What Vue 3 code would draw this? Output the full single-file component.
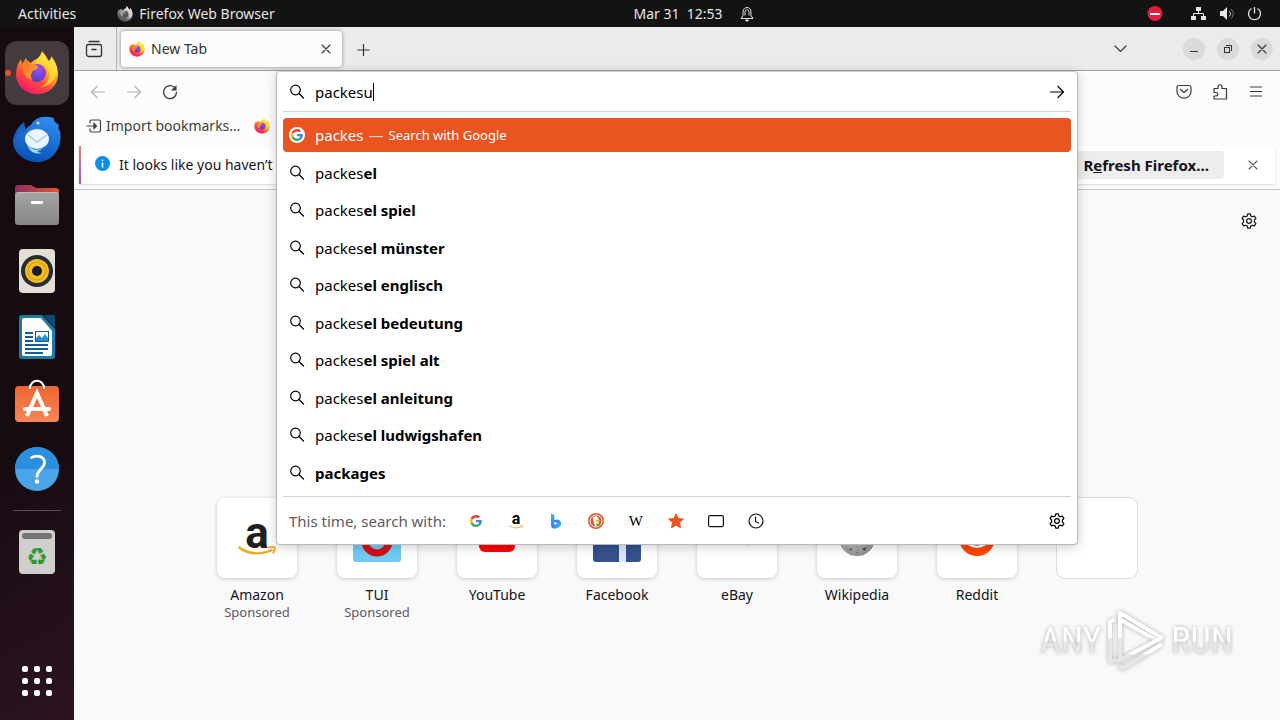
<script setup>
import { ref } from 'vue'

const query = ref('packesu')

const suggestions = [
  { typed: 'packes', rest: 'el' },
  { typed: 'packes', rest: 'el spiel' },
  { typed: 'packes', rest: 'el münster' },
  { typed: 'packes', rest: 'el englisch' },
  { typed: 'packes', rest: 'el bedeutung' },
  { typed: 'packes', rest: 'el spiel alt' },
  { typed: 'packes', rest: 'el anleitung' },
  { typed: 'packes', rest: 'el ludwigshafen' },
  { typed: '', rest: 'packages' }
]

const dockApps = [
  { id: 'firefox', name: 'Firefox', size: 44, active: true },
  { id: 'thunderbird', name: 'Thunderbird', size: 48 },
  { id: 'files', name: 'Files', size: 48 },
  { id: 'rhythmbox', name: 'Rhythmbox', size: 48 },
  { id: 'writer', name: 'LibreOffice Writer', size: 48 },
  { id: 'software', name: 'Ubuntu Software', size: 48 },
  { id: 'help', name: 'Help', size: 48 }
]

const engines = [
  { id: 'google', name: 'Google' },
  { id: 'amazon', name: 'Amazon' },
  { id: 'bing', name: 'Bing' },
  { id: 'duck', name: 'DuckDuckGo' },
  { id: 'wikipedia', name: 'Wikipedia' },
  { id: 'star', name: 'Bookmarks' },
  { id: 'tabs', name: 'Tabs' },
  { id: 'history', name: 'History' }
]

const sites = [
  { id: 'amazon', name: 'Amazon', sponsored: true },
  { id: 'tui', name: 'TUI', sponsored: true },
  { id: 'youtube', name: 'YouTube' },
  { id: 'facebook', name: 'Facebook' },
  { id: 'ebay', name: 'eBay' },
  { id: 'globe', name: 'Wikipedia' },
  { id: 'reddit', name: 'Reddit' }
]
</script>

<template>
  <div class="desktop">
    <svg class="sprite" aria-hidden="true">
      <defs>
        <linearGradient id="fx-body" x1="0.85" y1="0.1" x2="0.3" y2="1">
          <stop offset="0" stop-color="#fff14a" />
          <stop offset="0.35" stop-color="#ffad1f" />
          <stop offset="0.65" stop-color="#ff4d3a" />
          <stop offset="1" stop-color="#f5156c" />
        </linearGradient>
        <linearGradient id="fx-ear" x1="0" y1="0" x2="1" y2="1">
          <stop offset="0" stop-color="#ff6a2c" />
          <stop offset="1" stop-color="#ffb02a" />
        </linearGradient>
        <radialGradient id="fx-globe" cx="0.6" cy="0.3" r="0.7">
          <stop offset="0" stop-color="#9a4df0" />
          <stop offset="1" stop-color="#5b3bc4" />
        </radialGradient>
        <linearGradient id="tb-body" x1="0.7" y1="0" x2="0.4" y2="1">
          <stop offset="0" stop-color="#2f8ff0" />
          <stop offset="1" stop-color="#0b51b5" />
        </linearGradient>
        <linearGradient id="folder-back" x1="0" x2="1">
          <stop offset="0" stop-color="#8a2f62" />
          <stop offset="1" stop-color="#e9542a" />
        </linearGradient>
        <linearGradient id="folder-front" x1="0" y1="0" x2="0" y2="1">
          <stop offset="0" stop-color="#a5a5a5" />
          <stop offset="1" stop-color="#868686" />
        </linearGradient>
        <linearGradient id="bag" x1="0" y1="0" x2="0" y2="1">
          <stop offset="0" stop-color="#f0652f" />
          <stop offset="1" stop-color="#f4865a" />
        </linearGradient>
        <linearGradient id="bing-fill" x1="0" y1="0" x2="1" y2="1">
          <stop offset="0" stop-color="#5aa8f8" />
          <stop offset="0.5" stop-color="#2f86f2" />
          <stop offset="1" stop-color="#45c4f4" />
        </linearGradient>
        <linearGradient id="mark" x1="0" y1="0" x2="0" y2="1">
          <stop offset="0.5" stop-color="#ffffff" />
          <stop offset="0.52" stop-color="#e6e6e8" />
        </linearGradient>
        <radialGradient id="globe-fill" cx="0.4" cy="0.3" r="0.7">
          <stop offset="0" stop-color="#f4f4f4" />
          <stop offset="1" stop-color="#8f8f8f" />
        </radialGradient>
      </defs>

      <symbol id="firefox" viewBox="0 0 44 44">
        <path fill="url(#fx-body)" d="M27 1c3 3 5 6 6 9 3-1 3-3 3-4 4 4 7 10 7 17 0 12-9 20-21 20S1 34 1 23c0-6 2-11 5-15l1 5 4-6c1 3 3 4 5 5 3-4 8-3 11-11z" />
        <path fill="#ffe13b" d="M27 0c-1 5-5 8-6 13 4-2 12 0 13 9 1 7-3 12-8 14 8-1 15-7 16-14 1-7-3-14-6-17 0 2 0 4-2 6-1-4-4-7-7-11z" opacity=".75" />
        <circle cx="22" cy="22" r="9" fill="url(#fx-globe)" />
        <path fill="url(#fx-ear)" d="M11 8c1 3 3 5 6 5 2 0 6 1 6 3 0 3-5 3-6 5-1 3-2 5 1 8-8-1-11-9-10-13 0-3 1-6 3-8z" />
      </symbol>

      <symbol id="thunderbird" viewBox="0 0 48 48">
        <path fill="#1560c0" d="M11 7c-6 5-11 12-11 20 1 10 9 18 20 19L14 20z" />
        <path fill="url(#tb-body)" d="M18 10c4-8 13-10 23-7-1 2 0 4 5 7-1 2-1 4 1 6 3 16-7 31-23 31C11 47 3 39 3 29c0-7 3-11 7-14-1 3 0 5 1 6 0-5 3-9 7-11z" />
        <ellipse cx="24" cy="24" rx="12" ry="10" fill="#eaf6fd" />
        <path fill="none" stroke="#9fcde8" stroke-width="1.5" d="M15 20l9 7 10-7" />
        <path fill="#9bd9f7" d="M14 29c4 6 10 7 16 4-2 2-4 3-6 3 1 1 3 2 5 2-8 2-13-2-15-9z" />
        <circle cx="25" cy="8" r="1.5" fill="#bfe3ff" />
      </symbol>

      <symbol id="files" viewBox="0 0 48 48">
        <path fill="url(#folder-back)" d="M2 12V7q0-3 3-3h13l5 3h20q3 0 3 3v6H2z" />
        <rect x="2" y="11" width="44" height="33" rx="3" fill="url(#folder-front)" />
        <path stroke="#b9b9b9" d="M4 11.500h40" />
        <rect x="18" y="20" width="12" height="3" rx="1" fill="#fff" />
      </symbol>

      <symbol id="rhythmbox" viewBox="0 0 48 48">
        <rect x="6" y="2" width="36" height="44" rx="4" fill="#e4dfd6" />
        <circle cx="24" cy="24" r="16" fill="#272b33" />
        <circle cx="24" cy="24" r="12" fill="#f2bb25" />
        <circle cx="24" cy="24" r="9" fill="none" stroke="#d39a12" />
        <circle cx="24" cy="24" r="5" fill="#171a21" />
      </symbol>

      <symbol id="writer" viewBox="0 0 48 48">
        <path fill="#1c7aa6" d="M6 5q0-3 3-3h20l13 14v27q0 3-3 3H9q-3 0-3-3z" />
        <path fill="#0e4a6c" d="M30 2h12v13z" />
        <path fill="#fff" d="M9 7q0-2 2-2h17l11 13v23q0 2-2 2H11q-2 0-2-2z" />
        <path stroke="#135c96" stroke-width="2" d="M12 20h8M12 24h8M12 28h8M12 32h23M12 36h23M12 40h18" />
        <rect x="22.500" y="18.500" width="13" height="10" fill="#fff" stroke="#135c96" />
        <path fill="#2a8fd0" d="M23 28v-3l3-3 3 3 3-4 3 4v3z" />
      </symbol>

      <symbol id="software" viewBox="0 0 48 48">
        <path fill="none" stroke="#fff" stroke-width="2" d="M17 10c0-11 14-11 14 0" />
        <rect x="2" y="7" width="44" height="36" rx="4" fill="url(#bag)" />
        <path fill="none" stroke="#fff" stroke-width="2" d="M17 10V6m14 4V6" />
        <path fill="none" stroke="#fff" stroke-width="4" d="M14 37l10-23 10 23" />
        <path stroke="#fff" stroke-width="4" stroke-linecap="round" d="M12 30h24" />
      </symbol>

      <symbol id="help" viewBox="0 0 48 48">
        <circle cx="24" cy="24" r="22" fill="#4aa5e8" />
        <path fill="#2b8fdf" d="M2 24a22 22 0 0 1 44 0z" />
        <path fill="none" stroke="#fff" stroke-width="2.800" stroke-linecap="round" d="M18.500 12.500c6-3 13-1 13 5 0 6.500-7.500 6.500-7.500 14" />
        <circle cx="24" cy="36.500" r="2.300" fill="#fff" />
      </symbol>

      <symbol id="google" viewBox="0 0 48 48">
        <path fill="#EA4335" d="M24 9.500c3.540 0 6.710 1.220 9.210 3.600l6.850-6.850C35.900 2.380 30.470 0 24 0 14.620 0 6.510 5.380 2.560 13.220l7.980 6.190C12.430 13.720 17.740 9.500 24 9.500z" />
        <path fill="#4285F4" d="M46.980 24.550c0-1.570-.15-3.090-.38-4.550H24v9.020h12.940c-.58 2.960-2.260 5.480-4.780 7.180l7.730 6c4.510-4.180 7.090-10.360 7.090-17.650z" />
        <path fill="#FBBC05" d="M10.530 28.590c-.48-1.450-.76-2.990-.76-4.590s.27-3.140.76-4.590l-7.980-6.190C.92 16.460 0 20.120 0 24c0 3.880.92 7.540 2.560 10.780l7.970-6.190z" />
        <path fill="#34A853" d="M24 48c6.480 0 11.930-2.130 15.890-5.810l-7.730-6c-2.150 1.450-4.920 2.300-8.160 2.300-6.260 0-11.570-4.220-13.470-9.910l-7.980 6.190C6.510 42.620 14.620 48 24 48z" />
      </symbol>

      <symbol id="smile" viewBox="0 0 38 10">
        <path fill="none" stroke="#f2a81d" stroke-width="2.400" d="M.500 1c10 8 24 8 34 2.500" />
        <path fill="none" stroke="#f2a81d" stroke-width="1.800" d="M30 1.500q7-1.500 7 .500t-2 5.500" />
      </symbol>

      <symbol id="bing" viewBox="0 0 16 16">
        <path fill="url(#bing-fill)" d="M3 .500l3.300 1.200v5.300l2.700-.500c4.500.500 5.700 5 2.700 7.200L8.500 15.500c-3.500.500-5.500-.500-5.500-3.500zM6.300 9v3l3.200-1.800z" />
      </symbol>

      <symbol id="duck" viewBox="0 0 16 16">
        <circle cx="8" cy="8" r="8" fill="#de5833" />
        <circle cx="8" cy="8" r="6" fill="#de5833" stroke="#fff" />
        <path fill="#fff" d="M5 4c3-2 6 0 6 4l-1 4-3 1c-1-3-2-6-2-9z" />
        <path fill="#f5b82e" d="M8 7h4l-1 2H8z" />
        <path fill="#4cba3c" d="M8 11l4-1v3l-4-1z" />
      </symbol>

      <symbol id="star" viewBox="0 0 16 16">
        <path fill="#e95420" stroke="#e95420" stroke-linejoin="round" d="M8 .800l2.200 4.700 5.100.600-3.800 3.500 1 5.100L8 12.200l-4.500 2.500 1-5.100L.700 6.100l5.100-.600z" />
      </symbol>

      <symbol id="tabs" viewBox="0 0 16 16">
        <rect x=".600" y="2.600" width="14.800" height="11" rx="1.500" fill="none" stroke="#15141a" stroke-width="1.200" />
      </symbol>

      <symbol id="history" viewBox="0 0 16 16">
        <circle cx="8" cy="8" r="7" fill="none" stroke="#15141a" stroke-width="1.200" />
        <path fill="none" stroke="#15141a" stroke-width="1.200" stroke-linecap="round" d="M7.500 4v4.500l3 1.500" />
      </symbol>

      <symbol id="search" viewBox="0 0 16 16">
        <circle cx="6.500" cy="6" r="4.800" fill="none" stroke="currentColor" stroke-width="1.200" />
        <path stroke="currentColor" stroke-width="1.200" stroke-linecap="round" d="M10 9.500l4.500 4.500" />
      </symbol>

      <symbol id="gear" viewBox="0 0 16 16">
        <path fill="none" stroke="currentColor" stroke-width="1.200" stroke-linejoin="round" d="M6.700.800h2.600l.500 2.200 1.400.800 2.200-.700 1.500 2.300-1.500 1.600v2l1.500 1.600-1.500 2.300-2.200-.700-1.400.800-.500 2.200H6.700L6.200 13l-1.400-.800-2.200.700-1.500-2.300L2.600 9V7L1.100 5.400l1.500-2.300 2.200.700L6.200 3z" />
        <circle cx="8" cy="8" r="2.400" fill="none" stroke="currentColor" stroke-width="1.200" />
      </symbol>

      <symbol id="close" viewBox="0 0 16 16">
        <path stroke="currentColor" stroke-width="1.100" stroke-linecap="round" d="M4 4l8 8M12 4l-8 8" />
      </symbol>

      <symbol id="arrow" viewBox="0 0 16 16">
        <path fill="none" stroke="currentColor" stroke-width="1.200" stroke-linecap="round" stroke-linejoin="round" d="M1.500 8h13M9 2.500L14.500 8 9 13.500" />
      </symbol>

      <symbol id="tui" viewBox="0 0 48 48">
        <rect width="48" height="48" rx="3" fill="#70cbf4" />
        <path fill="none" stroke="#d40e14" stroke-width="7" d="M12 16v11a12 12 0 0 0 24 0V16" />
      </symbol>

      <symbol id="youtube" viewBox="0 0 48 48">
        <rect x="6" y="12" width="36" height="26" rx="6" fill="#f00" />
        <path fill="#fff" d="M20 19l10 5-10 5z" />
      </symbol>

      <symbol id="facebook" viewBox="0 0 48 48">
        <rect width="48" height="48" rx="3" fill="#34518f" />
        <path fill="#dce8fa" d="M26 48V18q0-9 9-9h6v6h-4q-4 0-4 4v29z" />
      </symbol>

      <symbol id="ebay" viewBox="0 0 48 48">
        <path stroke="#86b817" stroke-width="3" d="M40 18l-6 13" />
      </symbol>

      <symbol id="globe" viewBox="0 0 48 48">
        <circle cx="24" cy="24" r="18" fill="url(#globe-fill)" />
        <path fill="none" stroke="#777" d="M24 6v36M16 8c-6 10-6 22 2 34M32 8c6 10 6 22-2 34" opacity=".3" />
        <path fill="#444" d="M16 35l3-1-1 3zM29 35l4-2-1 4zM23 38h2v1z" />
      </symbol>

      <symbol id="reddit" viewBox="0 0 48 48">
        <circle cx="24" cy="24" r="18" fill="#ff4500" />
        <ellipse cx="24" cy="25" rx="12" ry="9" fill="#fff" />
        <path fill="none" stroke="#222" stroke-width="2" d="M18 28q6 5 12 0" />
      </symbol>
    </svg>

    <header class="topbar">
      <div class="topbar-left">
        <button class="top-button">Activities</button>
        <button class="top-button app-menu">
          <svg class="icon-16 gray"><use href="#firefox" /></svg>
          Firefox Web Browser
        </button>
      </div>
      <button class="top-button clock">
        <span>Mar 31&nbsp; 12:53</span>
        <svg class="icon-16" viewBox="0 0 16 16" fill="none" stroke="currentColor">
          <path d="M2 12.500l2-3V6c0-6 8-6 8 0v3.500l2 3zM6 9.500V6c0-3 4-3 4 0v3.500" />
          <path d="M6.500 14h3L8 15.500z" fill="currentColor" />
        </svg>
      </button>
      <div class="topbar-right">
        <button class="top-button" aria-label="Do not disturb">
          <svg class="icon-16" viewBox="0 0 16 16">
            <circle cx="8" cy="7.500" r="7.500" fill="#e01f3d" />
            <path stroke="#fff" stroke-width="2" d="M3 8h10" />
          </svg>
        </button>
        <button class="top-button status" aria-label="System">
          <svg class="icon-16" viewBox="0 0 16 16" fill="currentColor">
            <rect x="5" y="1" width="5" height="4" />
            <rect x="0" y="10" width="5" height="4" />
            <rect x="10" y="10" width="5" height="4" />
            <path fill="none" stroke="currentColor" d="M7.500 5v3M2.500 10V7.500h10V10" />
          </svg>
          <svg class="icon-16" viewBox="0 0 16 16">
            <path fill="currentColor" d="M1 5h3l4-4v13l-4-4H1z" />
            <path fill="none" stroke="currentColor" d="M10 5c2 1.500 2 4 0 5.500" />
            <path fill="none" stroke="#777" d="M12 3c3 3 3 6.500 0 9.500" />
          </svg>
          <svg class="icon-16" viewBox="0 0 16 16" fill="none" stroke="currentColor" stroke-width="1.300">
            <path d="M4.500 2.500a6 6 0 1 0 6 0M7.500 1v6.500" />
          </svg>
        </button>
      </div>
    </header>

    <div class="workspace">
      <nav class="dock" aria-label="Dock">
        <button
          v-for="app in dockApps"
          :key="app.id"
          class="dock-item"
          :class="{ active: app.active }"
          :aria-label="app.name"
        >
          <svg :width="app.size" :height="app.size"><use :href="'#' + app.id" /></svg>
        </button>
        <hr class="dock-line" />
        <button class="dock-item" aria-label="Trash">
          <span class="trash">
            <span class="trash-lid"></span>
            <span class="trash-sign">♻</span>
          </span>
        </button>
        <button class="dock-item apps" aria-label="Show Applications">
          <span class="dots">
            <i v-for="n in 9" :key="n"></i>
          </span>
        </button>
      </nav>

      <main class="browser">
        <div class="tabstrip">
          <button class="firefox-view" aria-label="Firefox View">
            <svg width="18" height="18" viewBox="0 0 18 18" fill="none" stroke="currentColor" stroke-width="1.300" stroke-linecap="round">
              <path d="M4 1.500h10" />
              <rect x="1.500" y="4.500" width="15" height="12" rx="2" />
              <path d="M7 9.500h4" />
            </svg>
          </button>
          <div class="tab">
            <svg class="icon-16"><use href="#firefox" /></svg>
            <span class="tab-title">New Tab</span>
            <button class="icon-button" aria-label="Close tab">
              <svg class="icon-16"><use href="#close" /></svg>
            </button>
          </div>
          <button class="icon-button new-tab" aria-label="New tab">
            <svg class="icon-16" viewBox="0 0 16 16"><path stroke="currentColor" stroke-width="1.200" d="M8.500 3v12M2.500 9h12" /></svg>
          </button>
          <button class="icon-button all-tabs" aria-label="List all tabs">
            <svg class="icon-16" viewBox="0 0 16 16"><path fill="none" stroke="currentColor" stroke-width="1.200" stroke-linecap="round" d="M2 5l5.500 5.500L13 5" /></svg>
          </button>
          <div class="window-controls">
            <button aria-label="Minimize">
              <svg class="icon-16" viewBox="0 0 16 16"><path stroke="currentColor" d="M4 10.500h8" /></svg>
            </button>
            <button aria-label="Restore">
              <svg class="icon-16" viewBox="0 0 16 16" fill="none" stroke="currentColor"><rect x="4.500" y="6.500" width="5" height="5" /><path d="M6 4.500h5.500V10" /></svg>
            </button>
            <button aria-label="Close window">
              <svg class="icon-16"><use href="#close" /></svg>
            </button>
          </div>
        </div>

        <div class="navbar">
          <div class="nav-group">
            <button class="icon-button disabled" aria-label="Back">
              <svg class="icon-16 flip"><use href="#arrow" /></svg>
            </button>
            <button class="icon-button disabled" aria-label="Forward">
              <svg class="icon-16"><use href="#arrow" /></svg>
            </button>
            <button class="icon-button" aria-label="Reload">
              <svg class="icon-16" viewBox="0 0 16 16">
                <path fill="none" stroke="currentColor" stroke-width="1.300" stroke-linecap="round" d="M14.500 8.500a6.500 6.500 0 1 1-2.500-5.500" />
                <path fill="currentColor" d="M14.500 1v5.500H9z" />
              </svg>
            </button>
          </div>
          <div class="nav-group">
            <button class="icon-button" aria-label="Pocket">
              <svg class="icon-16" viewBox="0 0 16 16" fill="none" stroke="currentColor" stroke-width="1.200" stroke-linecap="round">
                <path d="M3 1.500h10q2 0 2 2V7c0 9.500-14 9.500-14 0V3.500q0-2 2-2z" />
                <path d="M4.500 5.500L8 8.500l3.500-3" />
              </svg>
            </button>
            <button class="icon-button" aria-label="Extensions">
              <svg class="icon-16" viewBox="0 0 16 16" fill="none" stroke="currentColor" stroke-width="1.200" stroke-linejoin="round">
                <path d="M2 4.500h4V3c0-3 4-3 4 0v1.500h4.500v10.500H2V12h1.500c3 0 3-3.500 0-3.500H2z" />
              </svg>
            </button>
            <button class="icon-button" aria-label="Menu">
              <svg class="icon-16" viewBox="0 0 16 16"><path stroke="currentColor" stroke-width="1.200" d="M2 3h12M2 7.500h12M2 12h12" /></svg>
            </button>
          </div>
        </div>

        <div class="bookmarks">
          <button class="bookmark">
            <svg class="icon-16" viewBox="0 0 16 16" fill="none" stroke="currentColor" stroke-width="1.200" stroke-linecap="round">
              <path d="M4 5V3.500q0-1.500 1.500-1.500h7.500q1.500 0 1.500 1.500v9q0 1.500-1.500 1.500H5.500Q4 14 4 12.500V11M1 8h8" />
              <path fill="currentColor" d="M8 5.500L10.500 8 8 10.500z" />
            </svg>
            Import bookmarks…
          </button>
          <button class="bookmark" aria-label="Getting Started">
            <svg class="icon-16"><use href="#firefox" /></svg>
          </button>
        </div>

        <div class="notice-area">
          <div class="notice">
            <svg class="icon-16" viewBox="0 0 16 16">
              <circle cx="7.500" cy="6.500" r="7.500" fill="#0a90e8" />
              <path stroke="#fff" stroke-width="1.500" d="M7.500 5.500v5M7.500 2.500v1.500" />
            </svg>
            <span class="notice-text">It looks like you haven’t</span>
            <button class="refresh">R<u>e</u>fresh Firefox…</button>
            <button class="icon-button dismiss" aria-label="Dismiss">
              <svg class="icon-16"><use href="#close" /></svg>
            </button>
          </div>
        </div>

        <section class="newtab">
          <button class="icon-button customize" aria-label="Personalize new tab">
            <svg class="icon-16"><use href="#gear" /></svg>
          </button>
          <div class="sites">
            <a v-for="site in sites" :key="site.id" class="site" href="#">
              <span class="tile">
                <span v-if="site.id === 'amazon'" class="amazon-logo">
                  <span>a</span>
                  <svg width="38" height="10"><use href="#smile" /></svg>
                </span>
                <svg v-else class="tile-logo"><use :href="'#' + site.id" /></svg>
              </span>
              <span class="site-name">{{ site.name }}</span>
              <span v-if="site.sponsored" class="sponsored">Sponsored</span>
            </a>
            <a class="site" href="#" aria-label="Add shortcut">
              <span class="tile empty"></span>
            </a>
          </div>
        </section>

        <div class="urlbar">
          <div class="url-input">
            <label for="url" aria-label="Search with Google or enter address">
              <svg class="icon-16"><use href="#search" /></svg>
            </label>
            <div class="url-field">
              <input id="url" v-model="query" type="text" size="1" spellcheck="false" autocomplete="off" />
              <span class="caret"></span>
            </div>
            <button class="icon-button go" aria-label="Go">
              <svg class="icon-16"><use href="#arrow" /></svg>
            </button>
          </div>

          <div class="results">
            <button class="result selected">
              <span class="engine-badge"><svg class="icon-12"><use href="#google" /></svg></span>
              <span>packes</span>
              <span class="dash">—</span>
              <span class="action">Search with Google</span>
            </button>
            <button v-for="item in suggestions" :key="item.rest" class="result">
              <svg class="icon-16"><use href="#search" /></svg>
              <span>{{ item.typed }}<b>{{ item.rest }}</b></span>
            </button>
          </div>

          <div class="one-offs">
            <span class="one-offs-label">This time, search with:</span>
            <button v-for="engine in engines" :key="engine.id" class="engine" :aria-label="engine.name">
              <span v-if="engine.id === 'amazon'" class="amazon-logo mini">
                <span>a</span>
                <svg width="14" height="4"><use href="#smile" /></svg>
              </span>
              <span v-else-if="engine.id === 'wikipedia'" class="wiki-letter">W</span>
              <svg v-else :class="engine.id === 'google' ? 'icon-12' : 'icon-16'"><use :href="'#' + engine.id" /></svg>
            </button>
            <button class="icon-button search-settings" aria-label="Search settings">
              <svg class="icon-16"><use href="#gear" /></svg>
            </button>
          </div>
        </div>

        <div class="watermark">
          <span>ANY</span>
          <svg width="60" height="64" viewBox="0 0 60 64" fill="none" stroke="url(#mark)" stroke-width="4" stroke-linejoin="round">
            <path d="M9 10L4 13v40l6-3M14 52V4l42 25-4 3L15 11" />
            <path d="M10 53l45-24M16 60l40-25M16 60l-3-4" />
          </svg>
          <span>RUN</span>
        </div>
      </main>
    </div>
  </div>
</template>

<style>
body {
  margin: 0;
}
</style>

<style scoped>
.desktop {
  display: flex;
  flex-direction: column;
  min-height: 100vh;
  font-family: "Noto Sans", sans-serif;
  font-size: 14px;
  line-height: 20px;
  color: #15141a;
  background: #1c0e16;
}

.sprite {
  position: absolute;
  width: 0;
  height: 0;
}

svg {
  flex-shrink: 0;
}

button {
  display: flex;
  align-items: center;
  padding: 0;
  border: 0;
  background: none;
  color: inherit;
  font: inherit;
}

.icon-16 {
  width: 16px;
  height: 16px;
}

.icon-12 {
  width: 12px;
  height: 12px;
}

.icon-button {
  justify-content: center;
  width: 32px;
  height: 32px;
}

/* top panel */
.topbar {
  display: grid;
  grid-template-columns: 1fr auto 1fr;
  align-items: center;
  height: 27px;
  background: #131313;
  color: #e6e6e6;
}

.topbar-left {
  display: flex;
  gap: 41px;
  padding-left: 18px;
}

.app-menu {
  gap: 6px;
}

.gray {
  filter: grayscale(1);
}

.clock {
  gap: 16px;
  padding-left: 108px;
}

.topbar-right {
  display: flex;
  justify-content: flex-end;
  gap: 28px;
  padding-right: 17px;
}

.status {
  gap: 12px;
}

.workspace {
  display: flex;
  flex: 1;
}

/* dock */
.dock {
  display: flex;
  flex-direction: column;
  align-items: center;
  gap: 2px;
  width: 74px;
  padding: 14px 0 7px;
  box-sizing: border-box;
  background: linear-gradient(150deg, #170b12 60%, #2c1322);
}

.dock-item {
  position: relative;
  justify-content: center;
  width: 64px;
  height: 64px;
  border-radius: 12px;
}

.dock-item.active {
  background: #443b41;
}

.dock-item.active::before {
  content: "";
  position: absolute;
  left: 0;
  width: 6px;
  height: 6px;
  border-radius: 50%;
  background: #e95420;
}

.dock-line {
  width: 48px;
  margin: 7px 0;
  border: 0;
  border-top: 1px solid #57505a;
}

.trash {
  display: flex;
  flex-direction: column;
  align-items: center;
  width: 36px;
  height: 44px;
  padding-top: 3px;
  box-sizing: border-box;
  border-radius: 4px;
  background: #cfcfcd;
}

.trash-lid {
  flex-shrink: 0;
  width: 30px;
  height: 6px;
  border-radius: 3px;
  background: #747474;
}

.trash-sign {
  color: #2f9a2b;
  font-family: "DejaVu Sans", sans-serif;
  font-size: 24px;
  line-height: 36px;
}

.apps {
  margin-top: auto;
}

.dots {
  display: grid;
  grid-template-columns: repeat(3, 6px);
  gap: 6px;
}

.dots i {
  height: 6px;
  border-radius: 2px;
  background: #fff;
}

/* browser chrome */
.browser {
  position: relative;
  display: flex;
  flex: 1;
  flex-direction: column;
  min-width: 0;
  background: #fcfcfc;
}

.tabstrip {
  display: flex;
  align-items: center;
  height: 43px;
  border-bottom: 1px solid #a0a0a0;
  background: #ebebeb;
  color: #333;
}

.firefox-view {
  justify-content: center;
  width: 43px;
  height: 43px;
  padding-right: 2px;
  box-sizing: border-box;
  border-right: 1px solid #b4b4b4;
}

.tab {
  display: flex;
  align-items: center;
  gap: 6px;
  width: 221px;
  height: 36px;
  margin: 0 5px 0 4px;
  padding-left: 8px;
  box-sizing: border-box;
  border-radius: 4px;
  background: #fcfcfc;
  box-shadow: 0 0 4px rgba(0, 0, 0, 0.4);
}

.tab-title {
  flex: 1;
}

.all-tabs {
  margin-left: auto;
}

.window-controls {
  display: flex;
  gap: 12px;
  margin: 0 7px 0 46px;
}

.window-controls button {
  justify-content: center;
  width: 22px;
  height: 22px;
  border-radius: 50%;
  background: #dadada;
}

.navbar {
  display: flex;
  align-items: center;
  justify-content: space-between;
  height: 41px;
  padding: 0 8px;
}

.nav-group {
  display: flex;
  gap: 4px;
  color: #3a3a3e;
}

.disabled {
  color: #b0b0b0;
}

.flip {
  transform: scaleX(-1);
}

.bookmarks {
  display: flex;
  gap: 14px;
  height: 34px;
  padding-left: 12px;
  color: #3d3d3d;
}

.bookmark {
  gap: 4px;
  height: 28px;
}

.notice-area {
  padding: 0 5px 5px;
  border-bottom: 1px solid #c4c4c6;
}

.notice {
  display: flex;
  align-items: center;
  gap: 8px;
  height: 38px;
  padding: 0 6px 0 14px;
  border-left: 2px solid;
  border-image: linear-gradient(#f4825c, #9c50d8) 1;
  background: #fff;
  box-shadow: 0 1px 2px rgba(0, 0, 0, 0.15);
}

.notice svg {
  overflow: visible;
}

.notice-text {
  flex: 1;
}

.refresh {
  display: block;
  height: 28px;
  margin-right: 5px;
  padding: 0 15px;
  border-radius: 4px;
  background: #ededee;
  font-size: 15px;
  font-weight: 700;
}

.dismiss {
  color: #5b5b66;
}

/* new tab page */
.newtab {
  display: flex;
  flex: 1;
  flex-direction: column;
  background: #f9f9fb;
}

.customize {
  align-self: flex-end;
  margin: 15px 15px 0 0;
}

.sites {
  display: flex;
  justify-content: center;
  margin-top: 261px;
}

.site {
  display: flex;
  flex-direction: column;
  align-items: center;
  width: 120px;
  color: #15141a;
  text-decoration: none;
}

.tile {
  display: flex;
  align-items: center;
  justify-content: center;
  width: 80px;
  height: 80px;
  margin-bottom: 7px;
  border-radius: 8px;
  background: #fff;
  box-shadow: 0 1px 4px rgba(0, 0, 0, 0.2);
}

.tile.empty {
  box-shadow: 0 0 0 1px #dcdce0;
}

.tile-logo {
  width: 48px;
  height: 48px;
}

.amazon-logo {
  display: flex;
  flex-direction: column;
  align-items: center;
  color: #1f1f1f;
  font-family: Roboto, sans-serif;
  font-size: 44px;
  font-weight: 700;
  line-height: 26px;
}

.amazon-logo.mini {
  color: #000;
  font-size: 16px;
  line-height: 12px;
}

.wiki-letter {
  font-family: "Liberation Serif", serif;
  font-size: 15px;
}

.sponsored {
  font-size: 13px;
  line-height: 14px;
  color: #5b5b66;
}

/* address bar with its dropdown */
.urlbar {
  position: absolute;
  top: 44px;
  left: 202px;
  right: 202px;
  padding: 0 6px;
  border: 1px solid #b9b9b9;
  border-top-color: #d0d0d0;
  border-radius: 4px;
  background: #fff;
  color: #000;
  font-size: 15px;
  box-shadow: 0 2px 12px rgba(0, 0, 0, 0.2);
}

.url-input {
  display: flex;
  align-items: center;
  gap: 10px;
  height: 39px;
  padding-left: 6px;
  border-bottom: 1px solid #d4d4d4;
}

.url-input label {
  display: flex;
}

.url-field {
  display: flex;
  flex: 1;
  align-items: center;
}

.url-field input {
  field-sizing: content;
  padding: 0;
  border: 0;
  outline: 0;
  background: none;
  color: inherit;
  font: inherit;
}

.caret {
  width: 1px;
  height: 18px;
  background: #000;
}

.results {
  display: flex;
  flex-direction: column;
  justify-content: space-between;
  min-height: 372px;
  padding: 6px 0;
  border-bottom: 1px solid #d4d4d4;
}

.result {
  gap: 10px;
  height: 34px;
  padding: 0 6px;
  border-radius: 4px;
}

.result.selected {
  background: #e95420;
  color: #fff;
}

.engine-badge {
  display: flex;
  align-items: center;
  justify-content: center;
  width: 16px;
  height: 16px;
  border-radius: 50%;
  background: #fff;
}

.dash {
  margin: 0 -5px;
  opacity: 0.7;
}

.action {
  font-size: 13px;
}

.one-offs {
  display: flex;
  align-items: center;
  height: 47px;
  padding-left: 6px;
}

.one-offs-label {
  margin-right: 10px;
  color: #5b5b66;
}

.engine {
  justify-content: center;
  width: 40px;
  height: 32px;
}

.go,
.search-settings {
  width: 28px;
}

.search-settings {
  margin-left: auto;
}

/* recorder watermark */
.watermark {
  position: absolute;
  right: 47px;
  bottom: 47px;
  display: flex;
  align-items: center;
  gap: 5px;
  color: transparent;
  font-family: "Roboto Condensed", Roboto, sans-serif;
  font-size: 36px;
  line-height: 40px;
  filter: drop-shadow(0 0 2px rgba(0, 0, 0, 0.3));
}

.watermark span {
  background: linear-gradient(#fff 50%, #e6e6e8 52%);
  background-clip: text;
}
</style>
